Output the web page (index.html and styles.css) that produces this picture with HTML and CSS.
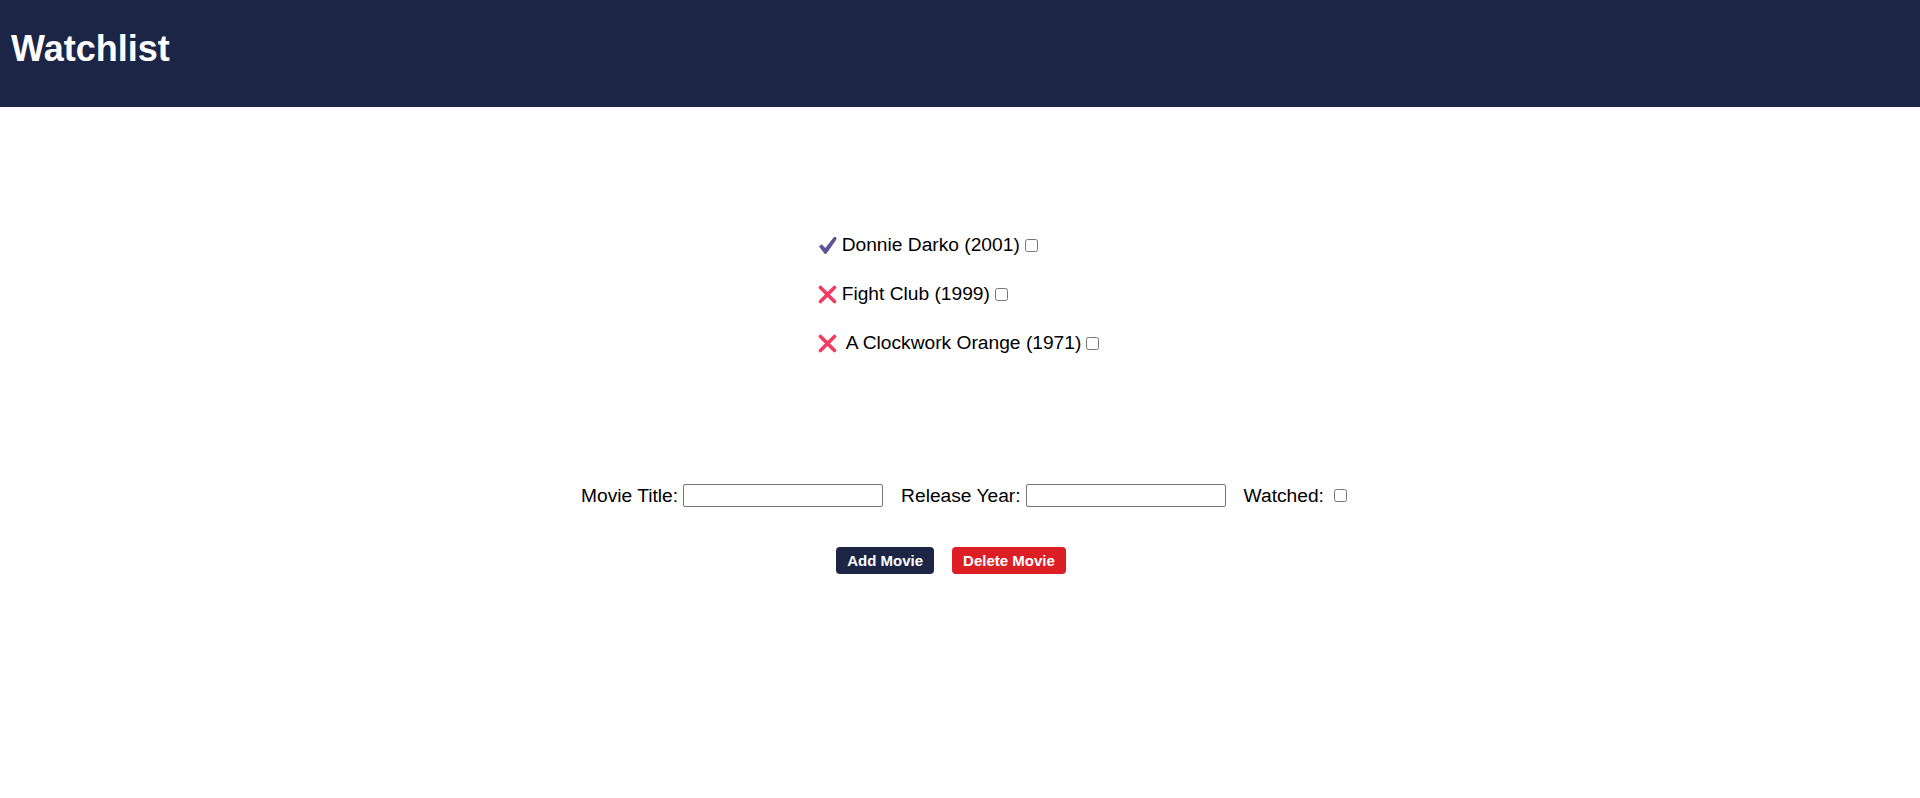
FILE: index.html
```html
<!DOCTYPE html>
<html>
<head>
<meta charset="utf-8">
<title>Watchlist</title>
<link rel="stylesheet" href="styles.css">
</head>
<body>
<header class="topbar">
  <h1 class="title">Watchlist</h1>
</header>
<main class="content">
  <div class="list-wrap">
    <ul class="movies">
      <li class="movie">
        <svg class="icon" width="19" height="19" viewBox="0 0 19 19"><path d="M1 10.6 L3.7 8.2 L7.3 12 L15.8 1.2 Q16.9 0.3 18 1.2 L18.4 1.8 Q18.8 2.8 18.2 3.7 L8.7 17.3 Q7.6 18.6 6.4 17.5 Z" fill="#5e5399"/></svg>
        <span class="name">Donnie Darko (2001)</span>
        <input type="checkbox" class="check">
      </li>
      <li class="movie">
        <svg class="icon" width="19" height="19" viewBox="0 0 19 19"><path d="M2.5 2.5 L16.5 16.5 M16.5 2.5 L2.5 16.5" stroke="#f23b60" stroke-width="3.6" stroke-linecap="round"/></svg>
        <span class="name">Fight Club (1999)</span>
        <input type="checkbox" class="check">
      </li>
      <li class="movie">
        <svg class="icon" width="19" height="19" viewBox="0 0 19 19"><path d="M2.5 2.5 L16.5 16.5 M16.5 2.5 L2.5 16.5" stroke="#f23b60" stroke-width="3.6" stroke-linecap="round"/></svg>
        <span class="name name-spaced">A Clockwork Orange (1971)</span>
        <input type="checkbox" class="check">
      </li>
    </ul>
  </div>
  <form class="add-form">
    <label class="field-label" for="title">Movie Title:</label>
    <input class="text-input" id="title" type="text">
    <label class="field-label gap-left" for="year">Release Year:</label>
    <input class="text-input" id="year" type="text">
    <label class="field-label gap-left" for="watched">Watched:</label>
    <input class="check check-form" id="watched" type="checkbox">
  </form>
  <div class="actions">
    <button class="btn btn-add" type="button">Add Movie</button>
    <button class="btn btn-delete" type="button">Delete Movie</button>
  </div>
</main>
</body>
</html>
```
FILE: styles.css
```css
html, body {
  margin: 0;
  padding: 0;
  background: #ffffff;
}

body {
  font-family: "Liberation Sans", Arial, sans-serif;
  color: #000000;
}

.topbar {
  height: 107px;
  box-sizing: border-box;
  background: #1d2546;
  padding: 28px 12px 0 11px;
}

.title {
  margin: 0;
  font-size: 36px;
  line-height: 42px;
  font-weight: bold;
  color: #ffffff;
}

.content {
  padding-top: 127px;
}

.list-wrap {
  display: flex;
  justify-content: center;
}

.movies {
  list-style: none;
  margin: 0;
  padding: 0;
}

.movie {
  display: flex;
  align-items: center;
  height: 22px;
  margin-bottom: 27px;
  font-size: 19.2px;
  line-height: 22px;
}

.movie:last-child {
  margin-bottom: 0;
}

.icon {
  flex: none;
  display: block;
  margin-right: 5px;
}

.name-spaced {
  margin-left: 4px;
}

.check {
  width: 13px;
  height: 13px;
  margin: 0 3px 0 5px;
}

.add-form {
  display: flex;
  justify-content: center;
  align-items: center;
  margin-top: 130px;
  padding-left: 11px;
  font-size: 19.2px;
  line-height: 22px;
}

.field-label {
  white-space: nowrap;
}

.gap-left {
  margin-left: 18px;
}

.text-input {
  width: 200px;
  height: 23px;
  box-sizing: border-box;
  margin: 0 0 0 5px;
  padding: 1px 2px;
  border: 1px solid #767676;
  border-radius: 2px;
  font-family: "Liberation Sans", Arial, sans-serif;
  font-size: 13px;
}

.check-form {
  margin-left: 10px;
}

.actions {
  display: flex;
  justify-content: center;
  margin-top: 40px;
  padding-left: 0;
}

.btn {
  height: 27px;
  box-sizing: border-box;
  padding: 0 11px;
  margin-right: 18px;
  border: none;
  border-radius: 4px;
  font-family: "Liberation Sans", Arial, sans-serif;
  font-size: 15px;
  font-weight: bold;
  color: #ffffff;
  cursor: pointer;
}

.btn-add {
  background: #1d2546;
}

.btn-delete {
  background: #dc1f24;
}
```
